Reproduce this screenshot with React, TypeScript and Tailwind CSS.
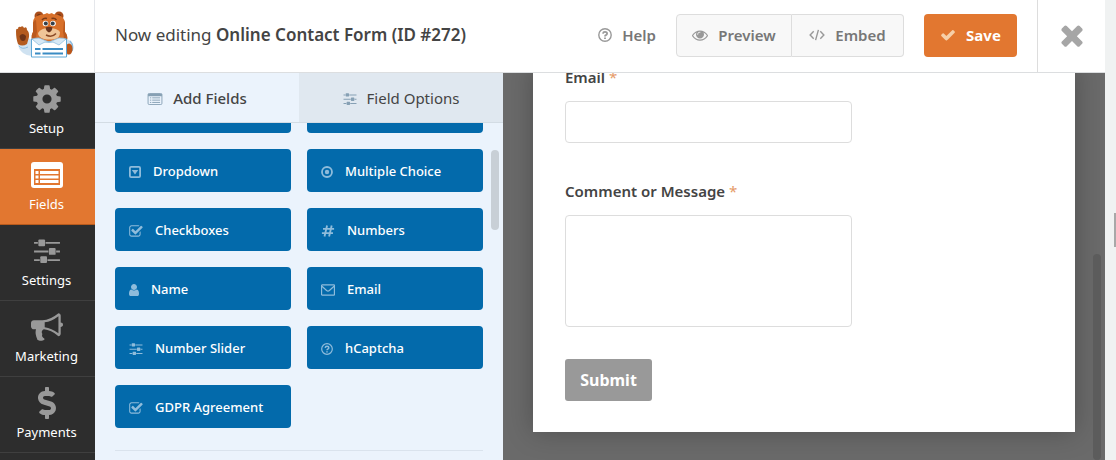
import { useState } from 'react';
import clsx from 'clsx';
import { FaDollarSign } from 'react-icons/fa';

interface IIconProps {
  className?: string;
}

interface IField {
  label: string;
  icon: (props: IIconProps) => React.ReactNode;
  size: string;
}

const glyph = (d: string, viewBox = '0 0 1792 1792') => {
  const Glyph = ({ className }: IIconProps) => (
    <svg viewBox={viewBox} fill="currentColor" aria-hidden="true" className={className}>
      <path d={d} />
    </svg>
  );
  return Glyph;
};

const CogIcon = glyph(
  'M1152 896q0-106-75-181t-181-75-181 75-75 181 75 181 181 75 181-75 75-181zm512-109v222q0 12-8 23t-20 13l-185 28q-19 54-39 91 35 50 107 138 10 12 10 25t-9 23q-27 37-99 108t-94 71q-12 0-26-9l-138-108q-44 23-91 38-16 136-29 186-7 28-36 28h-222q-14 0-24.5-8.5t-11.5-21.5l-28-184q-49-16-90-37l-141 107q-10 9-25 9-14 0-25-11-126-114-165-168-7-10-7-23 0-12 8-23 15-21 51-66.5t54-70.5q-27-50-41-99l-183-27q-13-2-21-12.5t-8-23.5v-222q0-12 8-23t19-13l186-28q14-46 39-92-40-57-107-138-10-12-10-24 0-10 9-23 26-36 98.5-107.5t94.5-71.5q13 0 26 10l138 107q44-23 91-38 16-136 29-186 7-28 36-28h222q14 0 24.5 8.5t11.5 21.5l28 184q49 16 90 37l142-107q9-9 24-9 13 0 25 10 129 119 165 170 7 8 7 22 0 12-8 23-15 21-51 66.5t-54 70.5q26 50 41 98l183 28q13 2 21 12.5t8 23.5z'
);

const BullhornIcon = glyph(
  'M1664 640q53 0 90.5 37.5t37.5 90.5-37.5 90.5-90.5 37.5v384q0 52-38 90t-90 38q-417-347-812-380-58 19-91 66t-31 100.5 40 92.5q-20 33-23 65.5t6 58 33.5 55 48 50 61.5 50.5q-29 58-111.5 83t-168.5 11.5-132-55.5q-7-23-29.5-87.5t-32-94.5-23-89-15-101 3.5-98.5 22-110.5h-122q-66 0-113-47t-47-113v-192q0-66 47-113t113-47h480q435 0 896-384 52 0 90 38t38 90v384zm-128 604v-954q-394 302-768 343v270q377 42 768 341z'
);

const EyeIcon = glyph(
  'M1664 960q-152-236-381-353 61 104 61 225 0 185-131.5 316.5t-316.5 131.5-316.5-131.5-131.5-316.5q0-121 61-225-229 117-381 353 133 205 333.5 326.5t434.5 121.5 434.5-121.5 333.5-326.5zm-720-384q0-20-14-34t-34-14q-125 0-214.5 89.5t-89.5 214.5q0 20 14 34t34 14 34-14 14-34q0-86 61-147t147-61q20 0 34-14t14-34zm848 384q0 34-20 69-140 230-376.5 368.5t-499.5 138.5-499.5-139-376.5-368q-20-35-20-69t20-69q140-229 376.5-368t499.5-139 499.5 139 376.5 368q20 35 20 69z'
);

const CheckIcon = glyph(
  'M1671 566q0 40-28 68l-724 724-136 136q-28 28-68 28t-68-28l-136-136-362-362q-28-28-28-68t28-68l136-136q28-28 68-28t68 28l294 295 656-657q28-28 68-28t68 28l136 136q28 28 28 68z'
);

const TimesIcon = glyph(
  'M1490 1322q0 40-28 68l-136 136q-28 28-68 28t-68-28l-294-294-294 294q-28 28-68 28t-68-28l-136-136q-28-28-28-68t28-68l294-294-294-294q-28-28-28-68t28-68l136-136q28-28 68-28t68 28l294 294 294-294q28-28 68-28t68 28l136 136q28 28 28 68t-28 68l-294 294 294 294q28 28 28 68z'
);

const CheckSquareIcon = glyph(
  'M1472 930v318q0 119-84.5 203.5t-203.5 84.5h-832q-119 0-203.5-84.5t-84.5-203.5v-832q0-119 84.5-203.5t203.5-84.5h832q63 0 117 25 15 7 18 23 3 17-9 29l-49 49q-10 10-23 10-3 0-9-2-23-6-45-6h-832q-66 0-113 47t-47 113v832q0 66 47 113t113 47h832q66 0 113-47t47-113v-254q0-13 9-22l64-64q10-10 23-10 6 0 12 3 20 8 20 29zm231-489l-814 814q-24 24-57 24t-57-24l-430-430q-24-24-24-57t24-57l110-110q24-24 57-24t57 24l263 263 647-647q24-24 57-24t57 24l110 110q24 24 24 57t-24 57z',
  '64 100 1680 1480'
);

const UserIcon = glyph(
  'M1536 1399q0 109-62.5 187t-150.5 78h-854q-88 0-150.5-78t-62.5-187q0-85 8.5-160.5t31.5-152 58.5-131 94-89 134.5-34.5q131 128 313 128t313-128q76 0 134.5 34.5t94 89 58.5 131 31.5 152 8.5 160.5zm-256-887q0 159-112.5 271.5t-271.5 112.5-271.5-112.5-112.5-271.5 112.5-271.5 271.5-112.5 271.5 112.5 112.5 271.5z',
  '256 128 1280 1536'
);

const ListIcon = ({ className }: IIconProps) => (
  <svg viewBox="0 0 32 26" aria-hidden="true" className={className}>
    <rect x="1" y="1" width="30" height="24" rx="2.5" fill="none" stroke="currentColor" strokeWidth="2" />
    <path d="M1 2h30v5H1z" fill="currentColor" />
    <path
      d="M5 10.5h3M10 10.5h17M5 15.500h3M10 15.5h17M5 20.500h3M10 20.5h17"
      stroke="currentColor"
      strokeWidth="2"
    />
  </svg>
);

// solid variant, used on the active sidebar item
const ListSolidIcon = ({ className }: IIconProps) => (
  <svg viewBox="0 0 32 26" aria-hidden="true" className={className}>
    <rect width="32" height="26" rx="3" fill="currentColor" />
    <path d="M3 7h26v16H3z" fill="#e27730" />
    <path d="M4.500 9h3v3h-3zM9 9h18.500v3H9zM4.500 13.500h3v3h-3zM9 13.500h18.500v3H9zM4.500 18h3v3h-3zM9 18h18.500v3H9z" fill="currentColor" />
  </svg>
);

const SlidersIcon = ({ className }: IIconProps) => (
  <svg viewBox="0 0 27 25" fill="currentColor" aria-hidden="true" className={className}>
    <path d="M0 3h4v2H0zM12 3h15v2H12zM0 12h15v2H0zM23 12h4v2h-4zM0 21h6v2H0zM14 21h13v2H14z" />
    <rect x="4.500" y="0.500" width="7" height="7" rx="1" />
    <rect x="15.500" y="9.500" width="7" height="7" rx="1" />
    <rect x="6.500" y="18" width="7" height="7" rx="1" />
  </svg>
);

const CaretSquareIcon = ({ className }: IIconProps) => (
  <svg viewBox="0 0 12 12" aria-hidden="true" className={className}>
    <rect x="0.900" y="0.900" width="10.200" height="10.200" rx="1.200" fill="none" stroke="currentColor" strokeWidth="1.800" />
    <path d="M2.800 4h6.400L6 8.600z" fill="currentColor" />
  </svg>
);

const DotCircleIcon = ({ className }: IIconProps) => (
  <svg viewBox="0 0 12 12" aria-hidden="true" className={className}>
    <circle cx="6" cy="6" r="5" fill="none" stroke="currentColor" strokeWidth="1.800" />
    <circle cx="6" cy="6" r="2.200" fill="currentColor" />
  </svg>
);

const HashIcon = ({ className }: IIconProps) => (
  <svg viewBox="0 0 14 13" fill="none" stroke="currentColor" strokeWidth="2" aria-hidden="true" className={className}>
    <path d="M6 0.500l-2.800 12M11 0.500l-2.800 12M1.600 4.200h12M0.400 8.800h12" />
  </svg>
);

const EnvelopeIcon = ({ className }: IIconProps) => (
  <svg viewBox="0 0 15 12" fill="none" stroke="currentColor" strokeWidth="1.300" aria-hidden="true" className={className}>
    <rect x="0.600" y="0.600" width="13.800" height="10.800" rx="0.600" />
    <path d="M1 2l5 4.500q1.500 1.200 3 0L14 2" />
  </svg>
);

const QuestionIcon = ({ className }: IIconProps) => (
  <svg viewBox="0 0 14 14" fill="none" stroke="currentColor" aria-hidden="true" className={className}>
    <circle cx="7" cy="7" r="6.200" strokeWidth="1.400" />
    <path d="M4.900 5.600Q5.200 3.900 7 3.900q2.100 0 2.100 1.600Q9.100 6.600 7.900 7.100 7 7.500 7 8.500" strokeWidth="1.800" />
    <path d="M6.100 9.500h1.800v1.600H6.100z" fill="currentColor" stroke="none" />
  </svg>
);

const CodeIcon = ({ className }: IIconProps) => (
  <svg viewBox="0 0 17 12" fill="none" stroke="currentColor" strokeWidth="1.500" aria-hidden="true" className={className}>
    <path d="M5 2L1.200 6 5 10M12 2l3.800 4L12 10M10 0.500L7 11.500" />
  </svg>
);

const BearLogo = ({ className }: IIconProps) => (
  <svg viewBox="0 0 58 47" aria-hidden="true" className={className}>
    <path d="M2 32q0 6 5 10 4 3 9 3V29l-4-2z" fill="#cfe2f1" />
    <path d="M3 35q3 4 9 1" stroke="#8dbbdd" fill="none" />
    <path d="M0 20q0-3 2-2 0-3 2.500-2 2.500-2 3.500 1 3-2 3 2 2.500 2 2 7l-2 7q-5 3-9 0-2-5-2-13z" fill="#b45a1e" />
    <path d="M3.500 25q3-4 6.500 0 0 5-3 5t-3.500-5z" fill="#6f3417" />
    <path d="M50 28q7 1 7 9-1 6-7 8z" fill="#cfe2f1" />
    <path d="M54 30q4 4 2 10" stroke="#8dbbdd" strokeWidth="1.500" fill="none" />
    <ellipse cx="53" cy="38" rx="3.500" ry="5.500" fill="#b9561a" />
    <circle cx="23" cy="5" r="4.500" fill="#a94d1a" />
    <circle cx="43" cy="5" r="4.500" fill="#a94d1a" />
    <circle cx="23" cy="5" r="2" fill="#6f3417" />
    <circle cx="43" cy="5" r="2" fill="#6f3417" />
    <path d="M17 12q0-7 7-8l5-1 2-1 2 1 3-1 1 1 5 1q6 1 7 8v9q3 3 2 8l-3 5H19l-3-5q-1-5 1-8z" fill="#d8702a" />
    <path d="M17 12v9q-2 3-1 8l3 5h3q-3-7-1-13l-1-12q-2 0-3 3zM49 12v9q3 3 2 8l-3 5h-2q3-7 1-13l1-12z" fill="#bb5a1f" />
    <path d="M22 22q3-5 11-5t11 4q0 6-5 7-6 1-11 0-6-2-6-6z" fill="#f0c598" />
    <circle cx="29.500" cy="12.500" r="2.800" fill="#fff" />
    <circle cx="37" cy="12.500" r="2.800" fill="#fff" />
    <circle cx="29.800" cy="12.500" r="2" fill="#35404a" />
    <circle cx="36.700" cy="12.500" r="2" fill="#35404a" />
    <path d="M26 9q2-2.500 5-1.500M35.500 7.500q3-1 5 1.500" stroke="#7a3a18" strokeWidth="1.500" fill="none" />
    <path d="M29.500 16.500q3.500-1.500 7 0-.5 4-3.500 5-3-1-3.500-5z" fill="#6b351e" />
    <path d="M30 24q6 3 10-1.500" stroke="#8a4a27" strokeWidth="1.500" fill="none" />
    <path d="M15.500 28q17 6 35 0v18h-35z" fill="#fff" stroke="#5fa8d6" />
    <path d="M16 28q3-1 7-1l10 4 10-4q5 0 7 1l-7 6-6-3h-8l-6 3z" fill="#d6e8f5" stroke="#8fbfe0" strokeWidth="0.800" />
    <path d="M19 38h5.500M26.500 38H47M19 42.500h5.500M26.500 42.500H47" stroke="#3a8cc4" strokeWidth="2" />
  </svg>
);

const navItems = [
  { label: 'Setup', icon: CogIcon, size: 'size-8' },
  { label: 'Fields', icon: ListSolidIcon, size: 'h-[26px] w-8' },
  { label: 'Settings', icon: SlidersIcon, size: 'h-6 w-7' },
  { label: 'Marketing', icon: BullhornIcon, size: 'size-8' },
  { label: 'Payments', icon: FaDollarSign, size: 'size-8' },
  { label: '', icon: CogIcon, size: 'size-8' },
];

const fields: IField[] = [
  { label: 'Dropdown', icon: CaretSquareIcon, size: 'size-3' },
  { label: 'Multiple Choice', icon: DotCircleIcon, size: 'size-3' },
  { label: 'Checkboxes', icon: CheckSquareIcon, size: 'h-3 w-3.5' },
  { label: 'Numbers', icon: HashIcon, size: 'h-3 w-3.5' },
  { label: 'Name', icon: UserIcon, size: 'h-3 w-2.5' },
  { label: 'Email', icon: EnvelopeIcon, size: 'h-3 w-3.5' },
  { label: 'Number Slider', icon: SlidersIcon, size: 'h-3 w-3.5' },
  { label: 'hCaptcha', icon: QuestionIcon, size: 'size-3' },
  { label: 'GDPR Agreement', icon: CheckSquareIcon, size: 'h-3 w-3.5' },
];

const Header = () => (
  <header className="relative z-10 flex h-[73px] shrink-0 items-stretch border-b border-[#dcdee0] bg-white">
    <div className="flex w-[95px] shrink-0 items-center justify-center border-r border-gray-200 pr-1 pb-1">
      <BearLogo className="h-[47px] w-[58px]" />
    </div>
    <h1 className="flex flex-1 items-center pb-0.5 pl-5 text-[17px] whitespace-nowrap text-[#444]">
      <span>
        Now editing <b className="font-semibold">Online Contact Form (ID #272)</b>
      </span>
    </h1>
    <div className="flex items-center pr-5 pb-0.5 text-[15px] font-semibold text-[#777]">
      <button className="flex items-center gap-2.5 pr-5">
        <QuestionIcon className="size-3.5 text-[#999]" />
        Help
      </button>
      <button className="flex h-[43px] w-[116px] items-center justify-center gap-2.5 rounded-l border border-[#ddd] bg-[#f8f8f8]">
        <EyeIcon className="size-4 text-[#999]" />
        Preview
      </button>
      <button className="flex h-[43px] w-28 items-center justify-center gap-2.5 rounded-r border border-l-0 border-[#ddd] bg-[#f8f8f8]">
        <CodeIcon className="h-3 w-4 text-[#999]" />
        Embed
      </button>
      <button className="ml-5 flex h-[43px] w-[93px] items-center justify-center gap-2.5 rounded bg-[#e27730] font-bold text-white">
        <CheckIcon className="size-4 text-[#f6cfa8]" />
        Save
      </button>
    </div>
    <button aria-label="Close" className="flex w-[68px] items-center justify-center border-l border-[#ddd] pb-0.5 text-[#a6a6a6]">
      <TimesIcon className="size-8" />
    </button>
  </header>
);

const Sidebar = () => (
  <nav className="flex w-[95px] shrink-0 flex-col bg-[#2d2d2d] text-[13px] text-white">
    {navItems.map(({ label, icon: Icon, size }) => (
      <a
        key={label}
        href="#"
        aria-label={label || 'More'}
        className={clsx(
          'flex h-[76px] shrink-0 flex-col items-center border-b pt-2 pr-0.5',
          label === 'Fields' ? 'border-[#b85a1c] bg-[#e27730]' : 'border-[#3f3f3f]'
        )}
      >
        <span className="flex h-9 items-center">
          <Icon className={clsx(size, label === 'Fields' ? 'text-white' : 'text-[#999]')} />
        </span>
        <span className="leading-[22px]">{label}</span>
      </a>
    ))}
  </nav>
);

const FieldsPanel = () => {
  const [tab, setTab] = useState('add');

  const tabClass = (name: string) =>
    clsx(
      'flex flex-1 items-center justify-center gap-2.5 border-b border-[#d3dce4] pt-0.5 text-[15px] text-[#444]',
      tab === name ? 'bg-[#ebf3fc] font-medium' : 'bg-[#e0e8f0]'
    );

  return (
    <section className="flex w-[408px] shrink-0 flex-col bg-[#ebf3fc]">
      <div className="flex h-[50px] shrink-0">
        <button className={tabClass('add')} onClick={() => setTab('add')}>
          <ListIcon className="h-3 w-4 text-[#86a0b4]" />
          Add Fields
        </button>
        <button className={tabClass('options')} onClick={() => setTab('options')}>
          <SlidersIcon className="h-3 w-3.5 text-[#86a0b4]" />
          Field Options
        </button>
      </div>
      <div className="relative min-h-0 flex-1 overflow-hidden px-5">
        <div className="-mt-[33px] grid grid-cols-2 gap-4 border-b border-[#dae3ed] pb-[22px]">
          <button aria-label="Single Line Text" className="h-[43px] rounded bg-[#036aab]" />
          <button aria-label="Paragraph Text" className="h-[43px] rounded bg-[#036aab]" />
          {fields.map(({ label, icon: Icon, size }) => (
            <button
              key={label}
              className="flex h-[43px] items-center gap-3 rounded bg-[#036aab] px-3.5 pt-0.5 text-[13px] font-medium text-white"
            >
              <Icon className={clsx(size, 'text-[#8fbcdb]')} />
              {label}
            </button>
          ))}
        </div>
        <div className="absolute top-[27px] right-1 h-20 w-2 rounded-full bg-[#c8cfd6]" />
      </div>
    </section>
  );
};

const Preview = () => (
  <main className="relative min-w-0 flex-1 overflow-hidden bg-[#6a6a6a] px-[30px]">
    <form
      onSubmit={(e) => e.preventDefault()}
      className="bg-white px-8 pb-[31px] text-[15px] font-semibold text-[#444] shadow-[0_0_25px_rgba(0,0,0,0.25)]"
    >
      <label htmlFor="email" className="-mt-2 block leading-6">
        Email <span className="font-normal text-[#e59a68]">*</span>
      </label>
      <input
        id="email"
        type="email"
        className="mt-3 block h-[42px] w-3/5 rounded-sm border border-[#ddd] bg-white px-3"
      />
      <label htmlFor="comment" className="mt-9 block leading-6">
        Comment or Message <span className="font-normal text-[#e59a68]">*</span>
      </label>
      <textarea
        id="comment"
        className="mt-3 block h-28 w-3/5 resize-none rounded-sm border border-[#ddd] bg-white p-3"
      />
      <button className="mt-8 block h-[42px] w-[87px] rounded-[3px] bg-[#999] text-base font-bold text-white">
        Submit
      </button>
    </form>
    <div className="absolute right-1 bottom-0 h-[206px] w-2 rounded-full bg-[#5c5c5c]" />
  </main>
);

const App = () => (
  <div className="flex h-screen overflow-hidden bg-[#f0f2f2] font-['Noto_Sans',sans-serif]">
    <div className="flex min-w-0 flex-1 flex-col">
      <Header />
      <div className="flex min-h-0 flex-1">
        <Sidebar />
        <FieldsPanel />
        <Preview />
      </div>
    </div>
    <div className="flex w-[11px] shrink-0 justify-end pt-[213px]">
      <div className="h-[34px] w-0.5 bg-[#a8a8a8]" />
    </div>
  </div>
);

export default App;
